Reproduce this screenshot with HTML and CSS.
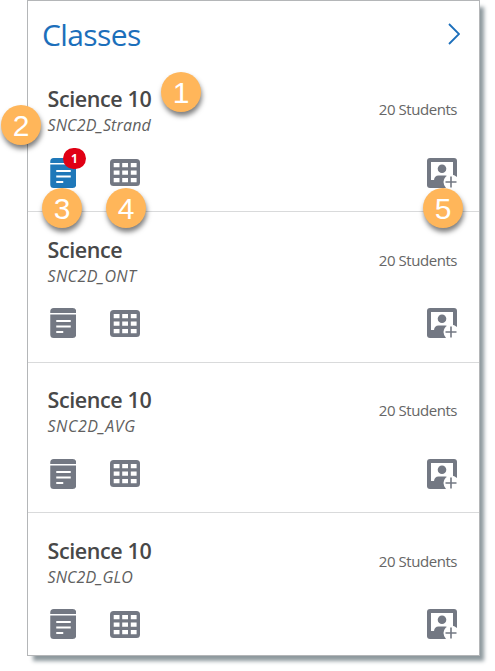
FILE: index.html
```
<!DOCTYPE html>
<html lang="en">
<head>
    <meta charset="UTF-8">
    <meta name="viewport" content="width=device-width, initial-scale=1.0">
    <title>Classes</title>
    <link rel="stylesheet" href="styles.css">
</head>
<body>
    <!-- Shared icons -->
    <svg class="sprite" width="0" height="0">
        <symbol id="icon-doc" viewBox="0 0 26 30">
            <path fill="currentColor" d="M0 5V3.500Q0 0 3.500 0H22.500Q26 0 26 3.500V5ZM0 6.500H26V26.500Q26 30 22.500 30H3.500Q0 30 0 26.500Z"/>
            <path class="lines" d="M6 13H20.500M6 18.500H20.500M6 24H13"/>
        </symbol>
        <symbol id="icon-grid" viewBox="0 0 30 27">
            <rect width="30" height="27" rx="3.500" fill="currentColor"/>
            <path fill="#fff" d="M3.700 4h5.800v4.200H3.700zM12.200 4h5.800v4.200h-5.800zM20.800 4h5.800v4.200h-5.800zM3.700 11.500h5.800v4.200H3.700zM12.200 11.500h5.800v4.200h-5.800zM20.800 11.500h5.800v4.200h-5.800zM3.700 19h5.800v4.200H3.700zM12.200 19h5.800v4.200h-5.800zM20.800 19h5.800v4.200h-5.800z"/>
        </symbol>
        <symbol id="icon-add" viewBox="0 0 30 30">
            <rect width="30" height="30" rx="3" fill="currentColor"/>
            <path fill="#fff" d="M4 4H26V22H4Z"/>
            <circle cx="15" cy="10.700" r="4.300" fill="currentColor"/>
            <path fill="currentColor" d="M4 26V22H7Q7.500 17.500 11.500 17.500H18.500Q21.500 17.500 23 20V26Z"/>
            <path fill="#fff" d="M30 19V30H19Q16.500 27 16.500 24A7.500 7.500 0 0 1 24 16.500Q27.500 16.500 30 19Z"/>
            <path class="plus" d="M18.500 24H29.500M24 18.500V29.500"/>
        </symbol>
    </svg>

    <div class="card">
        <div class="header">
            <h1>Classes</h1>
            <svg class="chevron" viewBox="0 0 12 22"><path d="M1 1L11 11L1 21"/></svg>
        </div>

        <div class="row">
            <div class="info">
                <h2>Science 10</h2>
                <p class="code strand">SNC2D_Strand</p>
                <div class="icons">
                    <div class="doc active">
                        <svg><use href="#icon-doc"/></svg>
                        <span class="badge">1</span>
                    </div>
                    <svg class="grid"><use href="#icon-grid"/></svg>
                </div>
            </div>
            <div class="side">
                <p class="students">20 Students</p>
                <svg class="add"><use href="#icon-add"/></svg>
            </div>
        </div>

        <div class="row">
            <div class="info">
                <h2>Science</h2>
                <p class="code ont">SNC2D_ONT</p>
                <div class="icons">
                    <div class="doc"><svg><use href="#icon-doc"/></svg></div>
                    <svg class="grid"><use href="#icon-grid"/></svg>
                </div>
            </div>
            <div class="side">
                <p class="students">20 Students</p>
                <svg class="add"><use href="#icon-add"/></svg>
            </div>
        </div>

        <div class="row">
            <div class="info">
                <h2>Science 10</h2>
                <p class="code avg">SNC2D_AVG</p>
                <div class="icons">
                    <div class="doc"><svg><use href="#icon-doc"/></svg></div>
                    <svg class="grid"><use href="#icon-grid"/></svg>
                </div>
            </div>
            <div class="side">
                <p class="students">20 Students</p>
                <svg class="add"><use href="#icon-add"/></svg>
            </div>
        </div>

        <div class="row">
            <div class="info">
                <h2>Science 10</h2>
                <p class="code glo">SNC2D_GLO</p>
                <div class="icons">
                    <div class="doc"><svg><use href="#icon-doc"/></svg></div>
                    <svg class="grid"><use href="#icon-grid"/></svg>
                </div>
            </div>
            <div class="side">
                <p class="students">20 Students</p>
                <svg class="add"><use href="#icon-add"/></svg>
            </div>
        </div>
    </div>

    <!-- Numbered callouts over the card -->
    <div class="callout one">1</div>
    <div class="callout two">2</div>
    <div class="callout three">3</div>
    <div class="callout four">4</div>
    <div class="callout five">5</div>
</body>
</html>
```

FILE: styles.css
```
:root {
    --blue: #1c6fbb;
    --icon: #737883;
    --orange: #ffb65a;
    --border: #b4b6b8;
}

* {
    box-sizing: border-box;
}

body {
    margin: 0;
    position: relative;
    height: 671px;
    overflow: hidden;
    background-color: #fff;
    font-family: 'Open Sans', 'Noto Sans', sans-serif;
}

h1, h2, p {
    margin: 0;
    white-space: nowrap;
}

svg {
    display: block;
}

.sprite {
    position: absolute;
}

.card {
    width: 453px;
    height: 656px;
    margin-left: 27px;
    background-color: #fff;
    border: 1px solid var(--border);
    box-shadow: 5px 6px 4px -1px #8e999e;
}

.header {
    display: flex;
    justify-content: space-between;
    height: 60.4px;
    padding: 0 19px 0 14px;
}

.header h1 {
    font-size: 30px;
    font-weight: 400;
    line-height: 68px;
    letter-spacing: -0.6px;
    color: var(--blue);
}

.chevron {
    width: 12px;
    height: 22px;
    margin-top: 22px;
    fill: none;
    stroke: var(--blue);
    stroke-width: 1.8;
}

.row {
    display: flex;
    justify-content: space-between;
    height: 150.6px;
    padding: 22.6px 22px 0 19.5px;
    border-bottom: 1px solid #d9dadb;
}

.row:last-child {
    border-bottom: none;
}

.row h2 {
    font-size: 21.5px;
    font-weight: 600;
    line-height: 30px;
    letter-spacing: -0.4px;
    color: #484848;
}

.code {
    margin-top: 1px;
    font-size: 16px;
    font-style: italic;
    line-height: 20px;
    color: #606060;
}

.strand {
    letter-spacing: 0.15px;
}

.ont {
    letter-spacing: 0.4px;
}

.avg {
    letter-spacing: 0.55px;
}

.glo {
    letter-spacing: 0.1px;
}

.icons {
    display: flex;
    align-items: center;
    gap: 34px;
    margin-top: 22.6px;
    padding-left: 2px;
    color: var(--icon);
}

.doc {
    position: relative;
}

.doc svg {
    width: 26.5px;
    height: 30px;
}

.active {
    color: #1f78b9;
}

.grid {
    width: 30px;
    height: 27px;
}

.lines {
    fill: none;
    stroke: #fff;
    stroke-width: 2;
}

.plus {
    fill: none;
    stroke: var(--icon);
    stroke-width: 1.6;
}

.badge {
    position: absolute;
    left: 13.5px;
    top: -10px;
    width: 23px;
    height: 21px;
    border-radius: 11px;
    background-color: #e00014;
    color: #fff;
    font-size: 12px;
    font-weight: 700;
    line-height: 21px;
    text-align: center;
}

.side {
    display: flex;
    flex-direction: column;
    align-items: flex-end;
    padding-top: 15px;
}

.students {
    font-size: 15px;
    line-height: 20px;
    letter-spacing: -0.45px;
    color: #666;
}

.add {
    width: 30px;
    height: 30px;
    margin-top: 38.6px;
    color: var(--icon);
}

.callout {
    position: absolute;
    width: 40px;
    height: 40px;
    border-radius: 50%;
    background-color: var(--orange);
    box-shadow: 1px 4px 5px rgba(0, 0, 0, 0.5);
    color: #fff;
    font-family: 'Liberation Sans', sans-serif;
    font-size: 30px;
    line-height: 42px;
    text-align: center;
}

.one {
    left: 161px;
    top: 72px;
}

.two {
    left: 1px;
    top: 105px;
}

.three {
    left: 42px;
    top: 188px;
}

.four {
    left: 106px;
    top: 188px;
}

.five {
    left: 423px;
    top: 188px;
}
```
